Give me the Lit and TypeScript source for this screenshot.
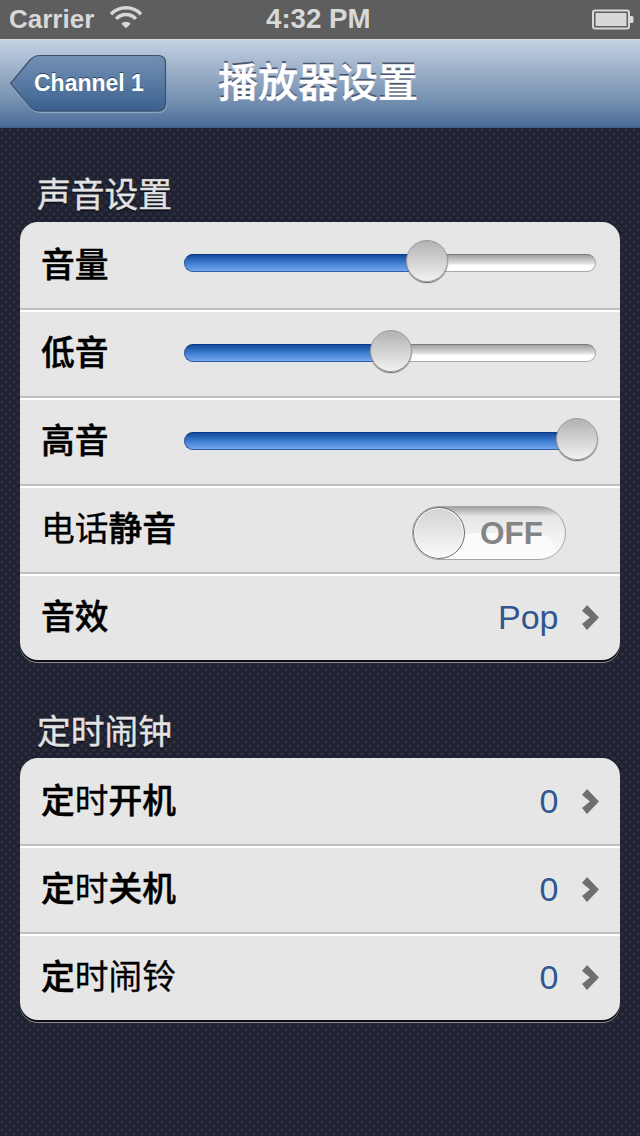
import { LitElement, css, html, svg } from "lit";
import { customElement } from "lit/decorators.js";

type Label = [string, boolean][];

const label = (parts: Label) =>
  parts.map(([t, bold]) => html`<span class=${bold ? "b" : "r"}>${t}</span>`);

const chevron = svg`<path d="M0 6 L5 0 L17 12.500 L5 25 L0 19 L8 12.500 Z" fill="#6f6f6f" />`;

@customElement("app-root")
export class AppRoot extends LitElement {
  private slider(name: string, pct: number) {
    return html`
      <div class="row">
        <div class="label">${label([[name, true]])}</div>
        <div class="slider">
          <div class="track"></div>
          <div class="fill" style="width:${pct}%"></div>
          <div class="thumb" style="left:${pct}%"></div>
        </div>
      </div>
    `;
  }

  private link(parts: Label, value: string) {
    return html`
      <div class="row">
        <div class="label">${label(parts)}</div>
        <div class="value">${value}</div>
        <svg class="chev" width="18" height="25" viewBox="0 0 18 25">${chevron}</svg>
      </div>
    `;
  }

  render() {
    return html`
      <div class="status">
        <span class="carrier">Carrier</span>
        <svg class="wifi" width="32" height="24" viewBox="0 0 34 24">
          <path d="M1 8 A22 22 0 0 1 33 8" fill="none" stroke="#d8d8d8" stroke-width="3.600" />
          <path d="M6.500 13 A14 14 0 0 1 27.500 13" fill="none" stroke="#d8d8d8" stroke-width="3.600" />
          <path d="M12 18 L17 23 L22 18 A7 7 0 0 0 12 18 Z" fill="#d8d8d8" />
        </svg>
        <span class="time">4:32 PM</span>
        <svg class="batt" width="42" height="22" viewBox="0 0 42 22">
          <rect x="1" y="1.500" width="36" height="18" rx="2" fill="none" stroke="#d8d8d8" stroke-width="2" />
          <rect x="3.500" y="4" width="31" height="13" fill="#d8d8d8" />
          <path d="M38 7 h2 a1.500 1.500 0 0 1 1.500 1.500 v4 a1.500 1.500 0 0 1 -1.500 1.500 h-2 Z" fill="#d8d8d8" />
        </svg>
      </div>
      <div class="nav">
        <div class="back">
          <svg width="158" height="60" viewBox="0 0 158 60">
            <defs>
              <linearGradient id="bk" x1="0" y1="0" x2="0" y2="1">
                <stop offset="0" stop-color="#7390b4" />
                <stop offset="0.5" stop-color="#587aa3" />
                <stop offset="1" stop-color="#3a5f8e" />
              </linearGradient>
            </defs>
            <path d="M1.500 29.500 L21 6 Q25 1.500 31 1.500 H149 Q156.500 1.500 156.500 9 V49 Q156.500 57 149 57 H31 Q25 57 21 53 Z"
              fill="url(#bk)" stroke="#3e5169" stroke-width="1.200" />
            <path d="M1 30.500 L21 54 Q25 58.500 31 58.500 H149 Q157 58.500 157.500 51"
              fill="none" stroke="#c0d0e2" stroke-opacity="0.5" stroke-width="1" />
          </svg>
          <span>Channel 1</span>
        </div>
        <div class="title">播放器设置</div>
      </div>
      <div class="content">
        <div class="head">声音设置</div>
        <div class="card">
          ${this.slider("音量", 59)}
          ${this.slider("低音", 50.25)}
          ${this.slider("高音", 95.4)}
          <div class="row">
            <div class="label">${label([["电话", false], ["静音", true]])}</div>
            <div class="switch">
              <div class="sheen"></div>
              <span class="off">OFF</span>
              <div class="knob"></div>
            </div>
          </div>
          ${this.link([["音效", true]], "Pop")}
        </div>
        <div class="head second">定时闹钟</div>
        <div class="card">
          ${this.link([["定", true], ["时", false], ["开机", true]], "0")}
          ${this.link([["定", true], ["时", false], ["关机", true]], "0")}
          ${this.link([["定", true], ["时闹铃", false]], "0")}
        </div>
      </div>
    `;
  }

  static styles = css`
    :host {
      display: block;
      width: 640px;
      height: 1136px;
      overflow: hidden;
      font-family: "Liberation Sans", "Noto Sans CJK SC", sans-serif;
      background-color: #1e2130;
      background-image:
        radial-gradient(circle at 2px 2px, #2b2e3d 0, #2b2e3d 1.500px, transparent 2px),
        radial-gradient(circle at 6px 6px, #2b2e3d 0, #2b2e3d 1.500px, transparent 2px);
      background-size: 8px 8px;
    }
    .status {
      height: 39px;
      background: #5e5e5e;
      border-bottom: 1px solid #d8d8d8;
      position: relative;
      display: flex;
      align-items: center;
      color: #d8d8d8;
      font-size: 26px;
      font-weight: 700;
      padding: 0 6px 0 9px;
    }
    .carrier {
      margin-right: 16px;
    }
    .wifi {
      margin-top: -3px;
    }
    .time {
      position: absolute;
      left: 266px;
      top: 3px;
      font-size: 27.700px;
    }
    .batt {
      margin-left: auto;
    }
    .nav {
      height: 88px;
      box-sizing: border-box;
      background: linear-gradient(#c3d0e0, #a3b5cd 30%, #6f8bad 75%, #4d6f99 98%);
      border-bottom: 2px solid #3f6390;
      display: flex;
      align-items: center;
      padding-left: 9px;
    }
    .back {
      position: relative;
      width: 158px;
      height: 60px;
      margin-top: 1px;
    }
    .back svg {
      display: block;
    }
    .back span {
      position: absolute;
      left: 25px;
      top: 14px;
      font-size: 23px;
      line-height: 30px;
      font-weight: 700;
      color: #fff;
      text-shadow: 0 -1px 0 #2d4666;
    }
    .title {
      margin-left: 51px;
      font-size: 40px;
      line-height: 50px;
      font-weight: 500;
      -webkit-text-stroke: 0.500px #fff;
      color: #fff;
      text-shadow: 0 -2px 0 #47566d;
    }
    .content {
      padding: 46px 20px 0;
    }
    .head {
      height: 48px;
      padding-left: 17px;
      font-size: 33.750px;
      line-height: 42px;
      color: #e2e2e2;
      -webkit-text-stroke: 0.400px #e2e2e2;
      text-shadow: 0 2px 1px #10121c;
    }
    .head.second {
      margin-top: 50px;
      line-height: 44px;
    }
    .card {
      background: #e6e6e6;
      border-radius: 18px;
      box-shadow:
        0 2px 0 #0c0d14,
        0 3px 0 #8a8c94;
    }
    .row {
      height: 88px;
      box-sizing: border-box;
      display: flex;
      align-items: center;
      padding: 0 20px 4px 21px;
      border-bottom: 2px solid #fff;
      box-shadow: inset 0 -2px 0 #c0c0c0;
    }
    .row:first-child {
      height: 90px;
      padding-bottom: 2px;
    }
    .row:last-child {
      border-bottom: none;
      box-shadow: none;
      height: 84px;
      padding-bottom: 2px;
    }
    .row:first-child .slider {
      margin-top: -4px;
    }
    .label {
      font-size: 33.750px;
      line-height: 44px;
      color: #000;
      white-space: nowrap;
    }
    .b {
      font-weight: 500;
      -webkit-text-stroke: 0.500px #000;
    }
    .r {
      font-weight: 400;
      -webkit-text-stroke: 0.300px #000;
    }
    .slider {
      position: relative;
      margin-left: auto;
      margin-right: 4px;
      width: 412px;
      height: 18px;
    }
    .track {
      position: absolute;
      inset: 0;
      border-radius: 9px;
      box-sizing: border-box;
      border: 1px solid #a8a8a8;
      border-top-color: #7c7c7c;
      background: linear-gradient(#a0a0a0, #dcdcdc 50%, #fff 65%, #fff);
    }
    .fill {
      position: absolute;
      left: 0;
      top: 0;
      height: 18px;
      box-sizing: border-box;
      border-radius: 9px 0 0 9px;
      border: 1px solid #2d5ea6;
      border-top-color: #0d3a86;
      border-right: none;
      background: linear-gradient(#134a9c, #3f7dcf 50%, #72a9ed);
    }
    .thumb {
      position: absolute;
      top: -14px;
      width: 42px;
      height: 42px;
      margin-left: -21px;
      box-sizing: border-box;
      border-radius: 50%;
      border: 1px solid #9c9c9c;
      background: linear-gradient(#b2b2b2, #d8d8d8 60%, #f2f2f2);
      box-shadow: 0 1px 1px #666;
    }
    .switch {
      position: relative;
      margin-left: auto;
      margin-right: 34px;
      margin-top: 8px;
      width: 154px;
      height: 54px;
      box-sizing: border-box;
      border-radius: 27px;
      border: 1px solid #a6a6a6;
      overflow: hidden;
      background: linear-gradient(#a0a0a0, #e6e6e6 18%, #efefef 50%, #fcfcfc);
    }
    .sheen {
      position: absolute;
      left: 40px;
      right: 8px;
      top: 26px;
      bottom: 4px;
      border-radius: 24px 24px 0 0;
      background: #fbfbfb;
    }
    .off {
      position: absolute;
      left: 67px;
      top: 7px;
      font-size: 31.500px;
      line-height: 38px;
      font-weight: 700;
      color: #848484;
    }
    .knob {
      position: absolute;
      left: 0;
      top: 0;
      width: 52px;
      height: 52px;
      box-sizing: border-box;
      border-radius: 50%;
      border: 1px solid #6a6a6a;
      background: linear-gradient(#d2d2d2, #e6e6e6 50%, #fafafa);
      box-shadow: inset 0 0 0 1px #fff;
    }
    .value {
      margin-left: auto;
      font-size: 34px;
      line-height: 44px;
      color: #30568f;
    }
    .chev {
      margin-left: 23.500px;
      flex: none;
    }
  `;
}

declare global {
  interface HTMLElementTagNameMap {
    "app-root": AppRoot;
  }
}
